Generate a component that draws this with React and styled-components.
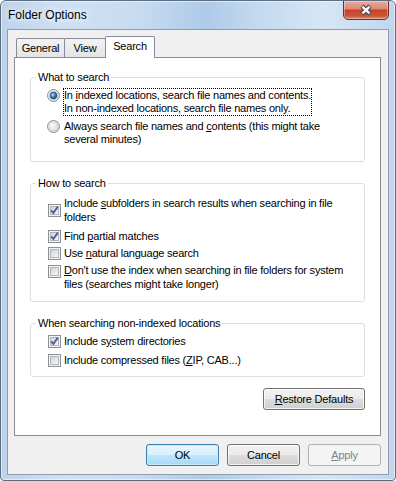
import React from "react";
import styled, { createGlobalStyle } from "styled-components";

const Global = createGlobalStyle`
  html, body { margin: 0; padding: 0; background: #ffffff; }
  body { font-family: "Liberation Sans", Arial, sans-serif; font-size: 11px; color: #000; }
  #root { width: 396px; height: 481px; }
`;

const Window = styled.div`
  box-sizing: border-box;
  width: 396px;
  height: 481px;
  border: 1px solid #5d6d80;
  border-radius: 6px 6px 4px 4px;
  background: linear-gradient(90deg, #bcd3ec 0%, #cfe0f3 16%, #c8dcf1 34%, #aecbe8 52%, #c4daf0 66%, #d6e6f6 82%, #c0d6ee 100%);
  box-shadow: inset 0 0 0 1px rgba(255, 255, 255, 0.55);
  display: flex;
  flex-direction: column;
  overflow: hidden;
`;

const TitleBar = styled.div`
  height: 28px;
  flex: none;
  display: flex;
  align-items: flex-start;
  padding: 0 6px 0 7px;
`;

const Title = styled.div`
  flex: 1;
  font-family: "Liberation Sans", Arial, sans-serif;
  font-size: 12px;
  line-height: 28px;
  color: #000;
  text-shadow: 0 0 6px #ffffff, 0 0 10px rgba(255, 255, 255, 0.9);
`;

const CloseButton = styled.div`
  box-sizing: border-box;
  width: 46px;
  height: 20px;
  margin-top: -1px;
  border: 1px solid #6b2f27;
  border-radius: 0 0 5px 5px;
  background: linear-gradient(#e8ab9d 0%, #dc8b79 42%, #c7432b 52%, #cc5437 82%, #df8a68 100%);
  box-shadow: inset 0 0 0 1px rgba(255, 255, 255, 0.35);
  display: flex;
  align-items: center;
  justify-content: center;
`;

const Client = styled.div`
  flex: 1;
  margin: 0 6px 5px 6px;
  border: 1px solid #8e9cae;
  background: #f0f0f0;
  display: flex;
  flex-direction: column;
  padding: 6px 7px 8px 6px;
  min-height: 0;
`;

const TabRow = styled.div`
  display: flex;
  align-items: flex-end;
  padding-left: 2px;
  height: 21px;
  flex: none;
`;

const Tab = styled.div`
  box-sizing: border-box;
  width: ${(p) => p.$w}px;
  height: ${(p) => (p.$active ? 22 : 19)}px;
  margin-left: ${(p) => (p.$first ? 0 : -1)}px;
  margin-bottom: ${(p) => (p.$active ? -1 : 0)}px;
  border: 1px solid #898c95;
  border-bottom: none;
  border-radius: 2px 2px 0 0;
  background: ${(p) => (p.$active ? "#ffffff" : "linear-gradient(#f3f3f3, #e4e4e4)")};
  position: ${(p) => (p.$active ? "relative" : "static")};
  z-index: ${(p) => (p.$active ? 1 : "auto")};
  text-align: center;
  line-height: 18px;
  letter-spacing: -0.2px;
`;

const Panel = styled.div`
  flex: 1;
  border: 1px solid #898c95;
  background: #ffffff;
  padding: 0 15px;
  display: flex;
  flex-direction: column;
  min-height: 0;
`;

const Group = styled.fieldset`
  margin: ${(p) => p.$mt}px 0 0 0;
  padding: ${(p) => p.$pt}px 0 ${(p) => p.$pb}px 0;
  border: 1px solid #d5dfe5;
  border-radius: 3px;
  min-width: 0;
`;

const Legend = styled.legend`
  margin-left: 5px;
  padding: 0 2px;
  line-height: 13px;
  letter-spacing: -0.2px;
`;

const Items = styled.div`
  display: flex;
  flex-direction: column;
  padding-left: ${(p) => p.$pl}px;
  padding-right: 8px;
`;

const Row = styled.div`
  display: flex;
  align-items: flex-start;
  margin-top: ${(p) => p.$mt || 0}px;
`;

const ControlSvg = styled.svg`
  flex: none;
  display: block;
  align-self: ${(p) => (p.$center ? "center" : "flex-start")};
  margin-top: ${(p) => (p.$center ? 0 : p.$mt || 0)}px;
`;

const Label = styled.div`
  margin-left: ${(p) => (p.$boxed ? 3 : 3)}px;
  border: ${(p) => (p.$boxed ? `1px dotted ${p.$focus ? "#000" : "transparent"}` : "none")};
  line-height: ${(p) => p.$lh}px;
  letter-spacing: -0.22px;
  white-space: nowrap;
`;

const U = styled.u`
  text-decoration: underline;
  text-underline-offset: 1px;
`;

const RestoreRow = styled.div`
  display: flex;
  justify-content: flex-end;
  margin-top: 11px;
`;

const ButtonRow = styled.div`
  display: flex;
  justify-content: flex-end;
  gap: 8px;
  margin-top: 8px;
  flex: none;
`;

const Button = styled.div`
  box-sizing: border-box;
  width: ${(p) => p.$w || 73}px;
  height: 22px;
  border: 1px solid ${(p) => (p.$default ? "#3c7fb1" : p.$disabled ? "#adb2b5" : "#707070")};
  border-radius: 3px;
  background: ${(p) =>
    p.$default
      ? "linear-gradient(#eaf6fd 0%, #d9f0fc 50%, #bee6fd 50%, #a7d9f5 100%)"
      : p.$disabled
      ? "#f4f4f4"
      : "linear-gradient(#f2f2f2 0%, #ebebeb 50%, #dddddd 50%, #cfcfcf 100%)"};
  box-shadow: ${(p) =>
    p.$default
      ? "inset 0 0 0 1px #c5ebfd"
      : p.$disabled
      ? "none"
      : "inset 0 0 0 1px rgba(255,255,255,0.75)"};
  color: ${(p) => (p.$disabled ? "#838383" : "#000")};
  display: flex;
  align-items: center;
  justify-content: center;
  letter-spacing: -0.2px;
`;

const CheckBox = ({ checked, center, mt }) => (
  <ControlSvg width="13" height="13" viewBox="0 0 13 13" $center={center} $mt={mt}>
    <defs>
      <linearGradient id="cbfill" x1="0" y1="0" x2="1" y2="1">
        <stop offset="0" stopColor="#cbd0d7" />
        <stop offset="0.55" stopColor="#e6e8eb" />
        <stop offset="1" stopColor="#f8f8f9" />
      </linearGradient>
    </defs>
    <rect x="0.5" y="0.5" width="12" height="12" fill="#f4f4f4" stroke="#8e8f8f" />
    <rect x="2.5" y="2.5" width="8" height="8" fill="url(#cbfill)" stroke="#b1b6bd" />
    {checked && (
      <path d="M3.2 6.3 L5.4 9 L9.8 2.6" fill="none" stroke="#4b5f98" strokeWidth="1.9" strokeLinejoin="miter" />
    )}
  </ControlSvg>
);

const Radio = ({ checked, mt }) => (
  <ControlSvg width="13" height="13" viewBox="0 0 13 13" $mt={mt}>
    <defs>
      <radialGradient id="rbfill" cx="0.35" cy="0.35" r="0.75">
        <stop offset="0" stopColor="#fbfbfb" />
        <stop offset="1" stopColor="#d6d8dc" />
      </radialGradient>
      <radialGradient id="rbdot" cx="0.4" cy="0.4" r="0.6">
        <stop offset="0" stopColor="#b8ecff" />
        <stop offset="0.45" stopColor="#3c95db" />
        <stop offset="1" stopColor="#18457c" />
      </radialGradient>
    </defs>
    <circle cx="6.5" cy="6.5" r="6" fill="url(#rbfill)" stroke="#8e8f8f" />
    <circle cx="6.5" cy="6.5" r="4.3" fill="none" stroke="#c9ccd1" strokeWidth="0.8" />
    {checked && <circle cx="6.5" cy="6.5" r="3.4" fill="url(#rbdot)" stroke="#1d3f6e" strokeWidth="0.6" />}
  </ControlSvg>
);

const CloseX = () => (
  <svg width="14" height="12" viewBox="0 0 14 12">
    <path d="M3 2.2 L11 9.8 M11 2.2 L3 9.8" stroke="#3a3d4e" strokeWidth="4.4" strokeLinecap="butt" />
    <path d="M3.4 2.6 L10.6 9.4 M10.6 2.6 L3.4 9.4" stroke="#ffffff" strokeWidth="2.4" strokeLinecap="butt" />
  </svg>
);

export default function App() {
  return (
    <>
      <Global />
      <Window>
        <TitleBar>
          <Title>Folder Options</Title>
          <CloseButton>
            <CloseX />
          </CloseButton>
        </TitleBar>
        <Client>
          <TabRow>
            <Tab $w={49} $first>General</Tab>
            <Tab $w={42}>View</Tab>
            <Tab $w={50} $active>Search</Tab>
          </TabRow>
          <Panel>
            <Group $mt={13} $pt={4} $pb={14}>
              <Legend>What to search</Legend>
              <Items $pl={16}>
                <Row>
                  <Radio checked mt={1} />
                  <Label $boxed $focus $lh={13}>
                    In <U>i</U>ndexed locations, search file names and contents.
                    <br />
                    In non-indexed locations, search file names only.
                  </Label>
                </Row>
                <Row $mt={3}>
                  <Radio mt={1} />
                  <Label $boxed $lh={13}>
                    Always search file names and <U>c</U>ontents (this might take
                    <br />
                    several minutes)
                  </Label>
                </Row>
              </Items>
            </Group>

            <Group $mt={15} $pt={6} $pb={10}>
              <Legend>How to search</Legend>
              <Items $pl={17}>
                <Row>
                  <CheckBox checked center />
                  <Label $lh={14}>
                    Include <U>s</U>ubfolders in search results when searching in file
                    <br />
                    folders
                  </Label>
                </Row>
                <Row $mt={5}>
                  <CheckBox checked mt={1} />
                  <Label $lh={14}>
                    Find <U>p</U>artial matches
                  </Label>
                </Row>
                <Row $mt={3}>
                  <CheckBox mt={1} />
                  <Label $lh={14}>
                    Use <U>n</U>atural language search
                  </Label>
                </Row>
                <Row $mt={3}>
                  <CheckBox mt={2} />
                  <Label $lh={14}>
                    <U>D</U>on't use the index when searching in file folders for system
                    <br />
                    files (searches might take longer)
                  </Label>
                </Row>
              </Items>
            </Group>

            <Group $mt={15} $pt={4} $pb={9}>
              <Legend>When searching non-indexed locations</Legend>
              <Items $pl={17}>
                <Row>
                  <CheckBox checked mt={1} />
                  <Label $lh={14}>
                    Include s<U>y</U>stem directories
                  </Label>
                </Row>
                <Row $mt={5}>
                  <CheckBox mt={1} />
                  <Label $lh={14}>
                    Include compressed files (<U>Z</U>IP, CAB...)
                  </Label>
                </Row>
              </Items>
            </Group>

            <RestoreRow>
              <Button $w={102}>
                <U>R</U>estore Defaults
              </Button>
            </RestoreRow>
          </Panel>
          <ButtonRow>
            <Button $default>OK</Button>
            <Button>Cancel</Button>
            <Button $disabled>
              <U>A</U>pply
            </Button>
          </ButtonRow>
        </Client>
      </Window>
    </>
  );
}
